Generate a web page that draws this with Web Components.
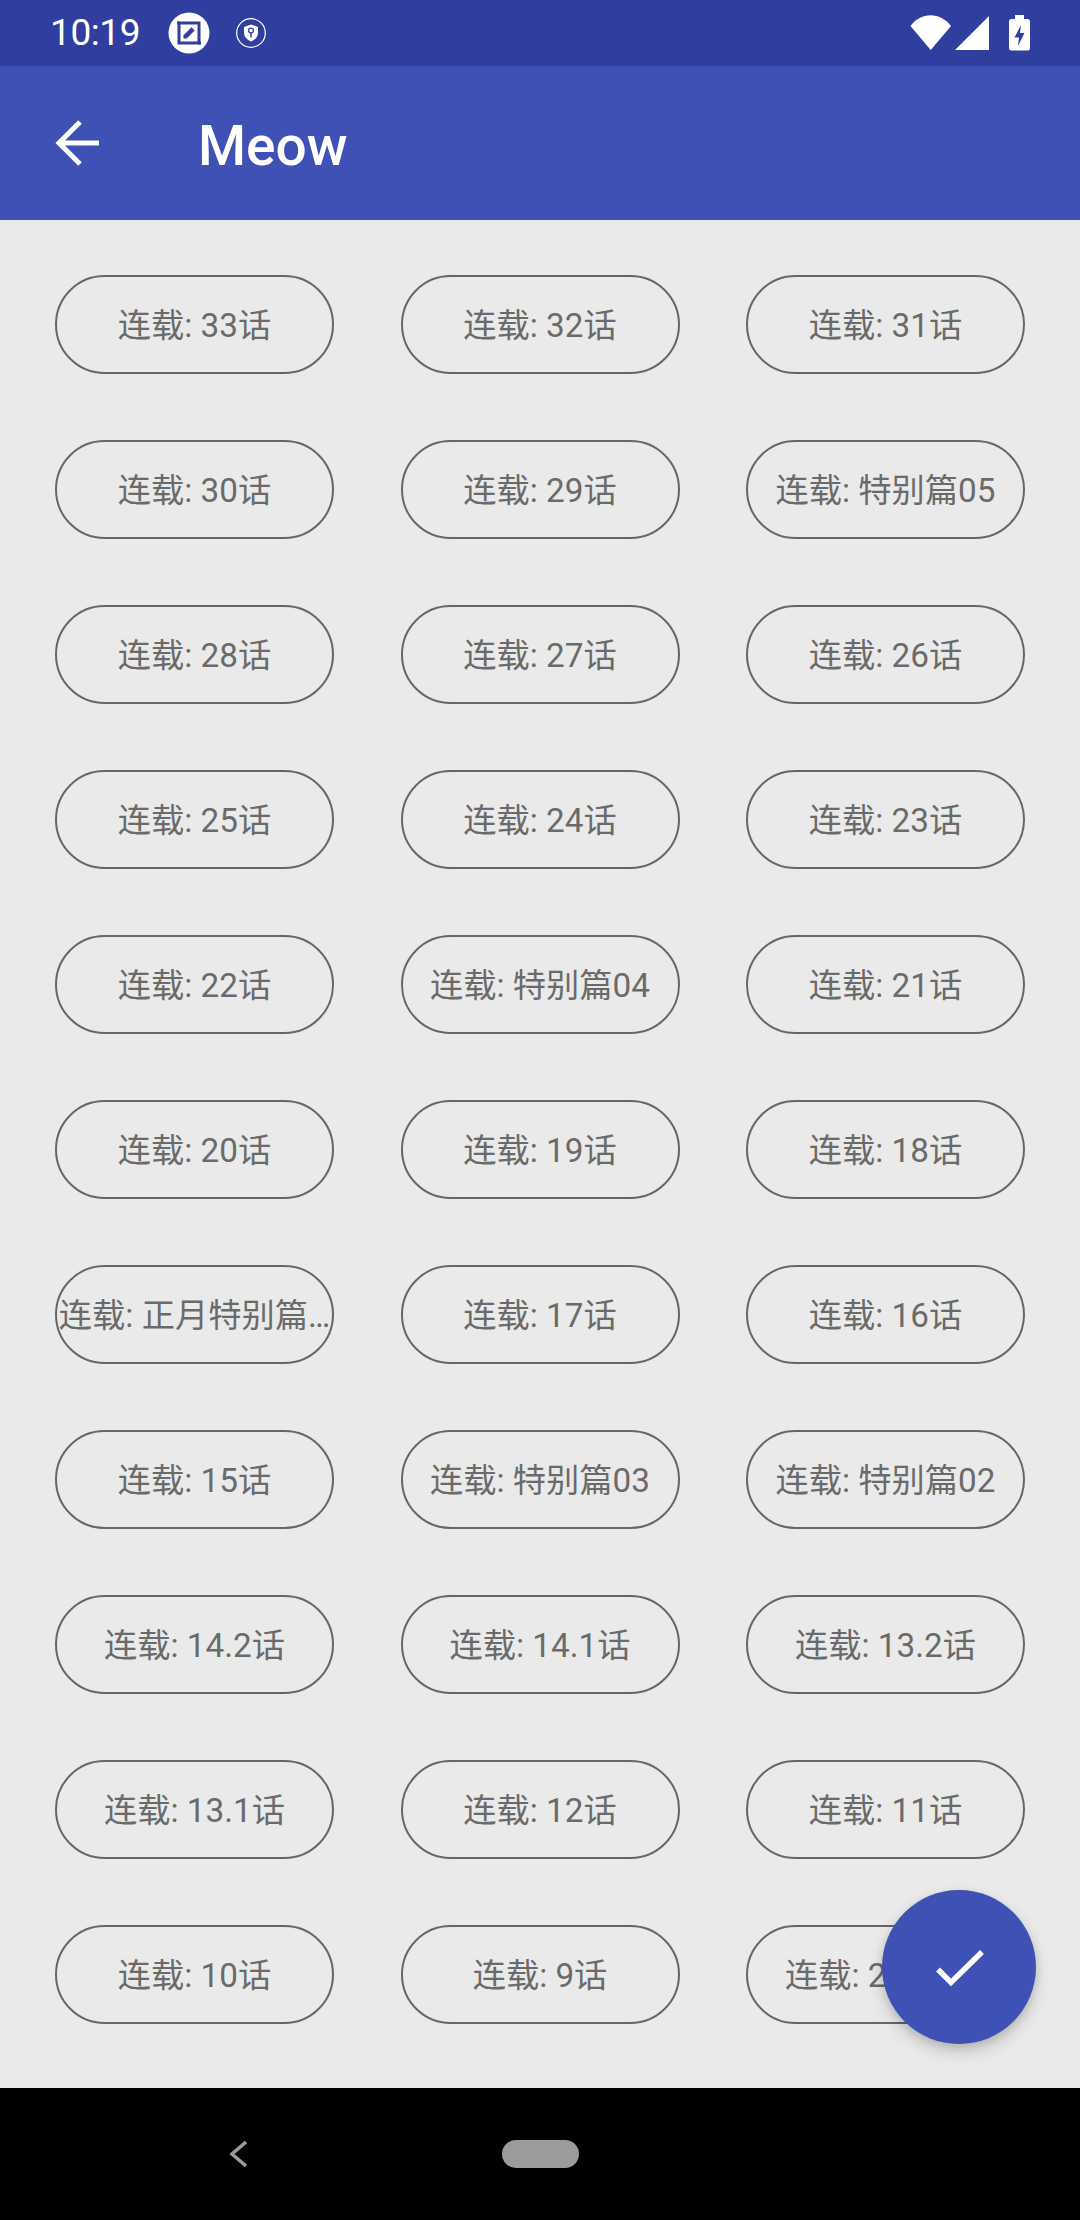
<!DOCTYPE html>
<html lang="zh">
<head>
<meta charset="utf-8">
<title>Meow</title>
<style>
html,body{margin:0;padding:0;background:#eaeaea;}
body{font-family:Roboto,"Noto Sans CJK SC",sans-serif;}
</style>
</head>
<body>
<meow-screen>
  <status-bar slot="status"></status-bar>
  <app-bar slot="bar" title-text="Meow"></app-bar>
  <chapter-grid slot="content"></chapter-grid>
  <fab-button slot="fab"></fab-button>
  <nav-bar slot="nav"></nav-bar>
</meow-screen>
<script>
function def(name, html, setup){
  customElements.define(name, class extends HTMLElement{
    constructor(){ super(); this.attachShadow({mode:'open'}).innerHTML = html; }
    connectedCallback(){ if(setup) setup(this); }
  });
}
def('meow-screen', `<style>
:host{display:flex;flex-direction:column;position:relative;width:1080px;height:2220px;overflow:hidden;background:#eaeaea}
.main{flex:1;min-height:0;overflow:hidden}
</style>
<slot name="status"></slot><slot name="bar"></slot>
<div class="main"><slot name="content"></slot></div>
<slot name="fab"></slot><slot name="nav"></slot>`);

def('status-bar', `<style>
:host{display:flex;align-items:center;height:66px;background:#303f9f;color:#fff;padding:0 50px 0 50px;box-sizing:border-box;flex:none}
.time{font:400 37px/66px Roboto,sans-serif;width:118px;letter-spacing:-.4px}
svg{display:block}
.sp{flex:1}
.b{margin-left:26px}
</style>
<span class="time">10:19</span>
<svg width="42" height="42" viewBox="0 0 42 42"><circle cx="21" cy="21" r="20.5" fill="#fff"/>
<path d="M11 11h20v20H11z" fill="none" stroke="#303f9f" stroke-width="3"/><path d="M9 9.500h3v3H9zM30 29.500h3v3h-3z" fill="#303f9f"/>
<path d="M15.500 26.500v-3.200l8-8 3.200 3.200-8 8z" fill="#303f9f"/></svg>
<svg class="b" width="30" height="30" viewBox="0 0 30 30"><circle cx="15" cy="15" r="14.300" fill="none" stroke="#fff" stroke-width="1.200"/>
<path d="M15 6.500l7 2.500v5.500c0 4.200-3 7.500-7 9-4-1.500-7-4.800-7-9V9z" fill="#fff"/>
<circle cx="15" cy="12.500" r="2.400" fill="none" stroke="#303f9f" stroke-width="1.300"/><path d="M15 15v4.500" stroke="#303f9f" stroke-width="1.500"/></svg>
<span class="sp"></span>
<svg width="120" height="66" viewBox="910 0 120 66">
<path d="M910.500 26C921 11.500 940 11.500 951 26L930.700 50z" fill="#fff"/>
<path d="M989 16V50H955z" fill="#fff"/>
<path d="M1015 15h9v4h3.500a2.500 2.500 0 0 1 2.500 2.500V48a2.500 2.500 0 0 1-2.500 2.500h-16a2.500 2.500 0 0 1-2.500-2.500V21.500a2.500 2.500 0 0 1 2.500-2.500h3.500z" fill="#fff"/>
<path d="M1021 25l-6.500 12.500h4.500l-1 8.500 6.500-13h-4.500z" fill="#303f9f"/>
</svg>`);

def('app-bar', `<style>
:host{display:flex;align-items:center;height:154px;background:#3f51b5;color:#fff;flex:none;box-sizing:border-box;padding-left:55px}
svg{display:block;flex:none}
.t{font:500 55px/1 Roboto,sans-serif;margin:7px 0 0 99px}
</style>
<svg width="44" height="46" viewBox="0 0 44 46"><path d="M44 23H4M25 2L4 23l21 21" fill="none" stroke="#fff" stroke-width="5"/></svg>
<span class="t"></span>`, el=>{el.shadowRoot.querySelector('.t').textContent = el.getAttribute('title-text');});

def('chapter-chip', `<style>
:host{display:flex;align-items:center;justify-content:center;box-sizing:border-box;height:99px;border:2px solid #666;border-radius:50px;padding:2px 0 0;
font:400 33.25px/1 Roboto,"Noto Sans CJK SC",sans-serif;color:#6a6a6a;white-space:nowrap;overflow:hidden;min-width:0}
</style><slot></slot>`);

const chapters = ['33话','32话','31话','30话','29话','特别篇05','28话','27话','26话','25话','24话','23话','22话','特别篇04','21话','20话','19话','18话','正月特别篇…','17话','16话','15话','特别篇03','特别篇02','14.2话','14.1话','13.2话','13.1话','12话','11话','10话','9话','2周年篇'];
def('chapter-grid', `<style>
:host{display:grid;grid-template-columns:repeat(3,279px);justify-content:space-between;row-gap:66px;padding:55px 55px 0;box-sizing:border-box;width:1080px}
</style><slot></slot>`, el=>{
  if(el.childElementCount) return;
  for(const c of chapters){
    const chip = document.createElement('chapter-chip');
    chip.textContent = '连载: ' + c;
    el.appendChild(chip);
  }
});

def('fab-button', `<style>
:host{position:absolute;right:44px;bottom:176px;width:154px;height:154px;border-radius:50%;background:#3f51b5;
box-shadow:0 8px 16px rgba(0,0,0,.16),0 3px 8px rgba(0,0,0,.1);display:flex;align-items:center;justify-content:center}
svg{display:block}
</style>
<svg width="154" height="154" viewBox="0 0 154 154"><path d="M56 79.500L69 92.500 100 62" fill="none" stroke="#fff" stroke-width="5.500"/></svg>`);

def('nav-bar', `<style>
:host{display:flex;align-items:flex-start;height:132px;background:#000;flex:none;box-sizing:border-box;padding:52px 0 0 229px}
svg{display:block}
.pill{width:77px;height:28px;border-radius:14px;background:#9b9b9b;margin-left:254px}
</style>
<svg width="19" height="28" viewBox="0 0 19 28"><path d="M17 2L3 14l14 12" fill="none" stroke="#9b9b9b" stroke-width="3.500"/></svg>
<div class="pill"></div>`);
</script>
</body>
</html>
